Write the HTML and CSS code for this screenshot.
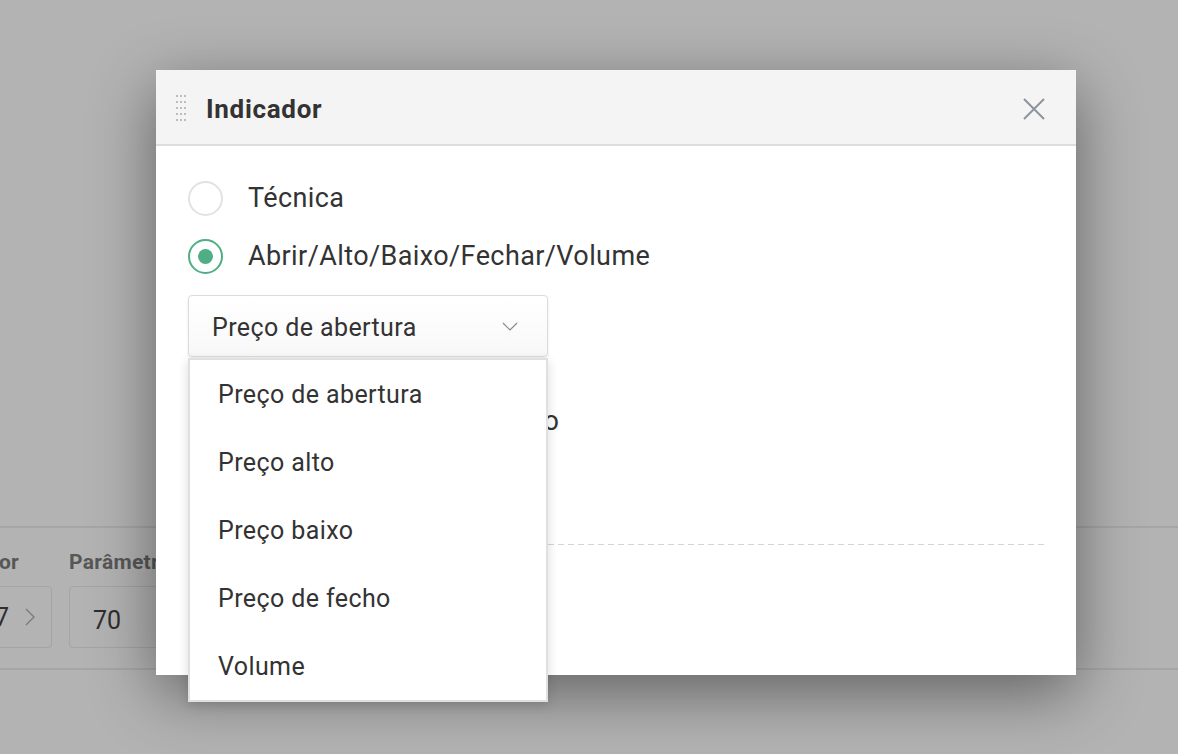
FILE: index.html
```html
<!DOCTYPE html>
<html>
<head>
  <meta charset='UTF-8'>
  <title>Indicador</title>
  <link rel="stylesheet" href="styles.css">
</head>
<body>
  <!-- pagina por tras do modal (ja escurecida) -->
  <div class='fundo'>
    <div class='linha-campos'>
      <div class='campo campo-valor'>
        <div class='campo-label'>Valor</div>
        <div class='campo-caixa'>
          <span class='campo-texto'>7</span>
          <svg class='seta-dir' width='10' height='18' viewBox='0 0 10 18'><path d='M1 1 L9 9 L1 17' fill='none' stroke='#7a7a7a' stroke-width='1.3'/></svg>
        </div>
      </div>
      <div class='campo campo-param'>
        <div class='campo-label'>Parâmetro</div>
        <div class='campo-caixa'><span class='campo-texto'>70</span></div>
      </div>
    </div>
  </div>

  <div class='modal'>
    <div class='modal-topo'>
      <div class='pega'>
        <i></i><i></i><i></i><i></i><i></i><i></i><i></i><i></i>
        <i></i><i></i><i></i><i></i><i></i><i></i><i></i>
      </div>
      <h2 class='titulo'>Indicador</h2>
      <svg class='fechar' width='22' height='22' viewBox='0 0 22 22'>
        <path d='M1 1 L21 21 M21 1 L1 21' stroke='#8d949d' stroke-width='2' fill='none'/>
      </svg>
    </div>
    <div class='modal-corpo'>
      <label class='opcao'><span class='radio'></span>Técnica</label>
      <label class='opcao'><span class='radio marcado'></span>Abrir/Alto/Baixo/Fechar/Volume</label>

      <div class='seletor'>
        <div class='seletor-caixa'>
          <span>Preço de abertura</span>
          <svg class='seta-baixo' width='16' height='9' viewBox='0 0 16 9'><path d='M1 1 L8 8 L15 1' fill='none' stroke='#8a8a8a' stroke-width='1.2'/></svg>
        </div>
        <ul class='lista'>
          <li>Preço de abertura</li>
          <li>Preço alto</li>
          <li>Preço baixo</li>
          <li>Preço de fecho</li>
          <li>Volume</li>
        </ul>
      </div>

      <label class='opcao opcao-baixo'><span class='radio'></span>Parâmetro personalizado</label>
      <div class='separador'></div>
    </div>
  </div>
</body>
</html>
```

FILE: styles.css
```css
body { margin: 0; height: 754px; overflow: hidden; background: #b3b3b3; font-family: Roboto, "Liberation Sans", sans-serif; color: #333; }

.fundo { padding-top: 526px; }
.linha-campos { display: flex; gap: 17px; margin-left: -32px; border-top: 2px solid #a6a6a6; border-bottom: 2px solid #a6a6a6; height: 144px; box-sizing: border-box; padding-top: 19px; }
.campo-label { font-size: 21px; font-weight: bold; color: #575757; line-height: 30px; margin-bottom: 9px; letter-spacing: 0.3px; }
.campo-caixa { height: 62px; box-sizing: border-box; border: 1px solid #a4a4a4; border-radius: 4px; display: flex; align-items: center; padding: 6px 22px 0 22px; font-size: 25px; color: #2e2e2e; }
.campo-valor .campo-caixa { width: 84px; justify-content: space-between; padding: 0 16px 0 26px; }
.campo-param .campo-caixa { width: 160px; padding-left: 23px; }
.seta-dir { display: block; }

.modal { position: absolute; left: 156px; top: 70px; width: 920px; height: 605px; background: #fff; box-shadow: 0 18px 60px rgba(0, 0, 0, 0.45); }
.modal-topo { box-sizing: border-box; height: 76px; padding: 4px 31px 0 20px; background: #f4f4f4; border-bottom: 2px solid #dddddd; display: flex; align-items: center; }
.pega { display: grid; grid-template-columns: repeat(3, 2px); column-gap: 2px; row-gap: 4px; width: 10px; margin-top: -2px; }
.pega i { display: block; width: 2px; height: 2px; background: #bdbdbd; }
.titulo { margin: 0 0 0 20px; font-size: 26px; font-weight: bold; color: #333; flex: 1; letter-spacing: 0.7px; }
.fechar { display: block; }

.modal-corpo { padding: 23px 32px 0 32px; }
.opcao { display: flex; align-items: center; height: 58px; font-size: 27px; letter-spacing: 0.4px; color: #333; }
.radio { width: 35px; height: 35px; box-sizing: border-box; border: 2px solid #e2e2e2; border-radius: 50%; margin-right: 25px; display: flex; align-items: center; justify-content: center; }
.radio.marcado { border-color: #4fae84; }
.radio.marcado::after { content: ''; width: 15px; height: 15px; border-radius: 50%; background: #4fae84; }

.seletor { position: relative; width: 360px; margin-top: 10px; }
.seletor-caixa { height: 62px; box-sizing: border-box; border: 1px solid #dcdcdc; border-radius: 4px; background: linear-gradient(#fff, #f8f8f8); box-shadow: 0 1px 3px rgba(0, 0, 0, 0.08); display: flex; align-items: center; justify-content: space-between; padding: 3px 29px 0 23px; font-size: 25px; letter-spacing: 0.4px; }
.seta-baixo { display: block; margin-top: -3px; }
.lista { position: absolute; left: 0; top: 63px; width: 360px; margin: 0; padding: 0; list-style: none; background: #fff; border: 2px solid #e0e0e0; box-sizing: border-box; box-shadow: 0 3px 10px rgba(0, 0, 0, 0.15); z-index: 2; }
.lista li { height: 68px; line-height: 70px; padding-left: 28px; font-size: 25px; letter-spacing: 0.4px; color: #333; }

.opcao-baixo { margin-top: 35px; }
.separador { margin-top: 94px; height: 1px; background: repeating-linear-gradient(to right, #d4d4d4 0 6px, transparent 6px 10px); }
```
